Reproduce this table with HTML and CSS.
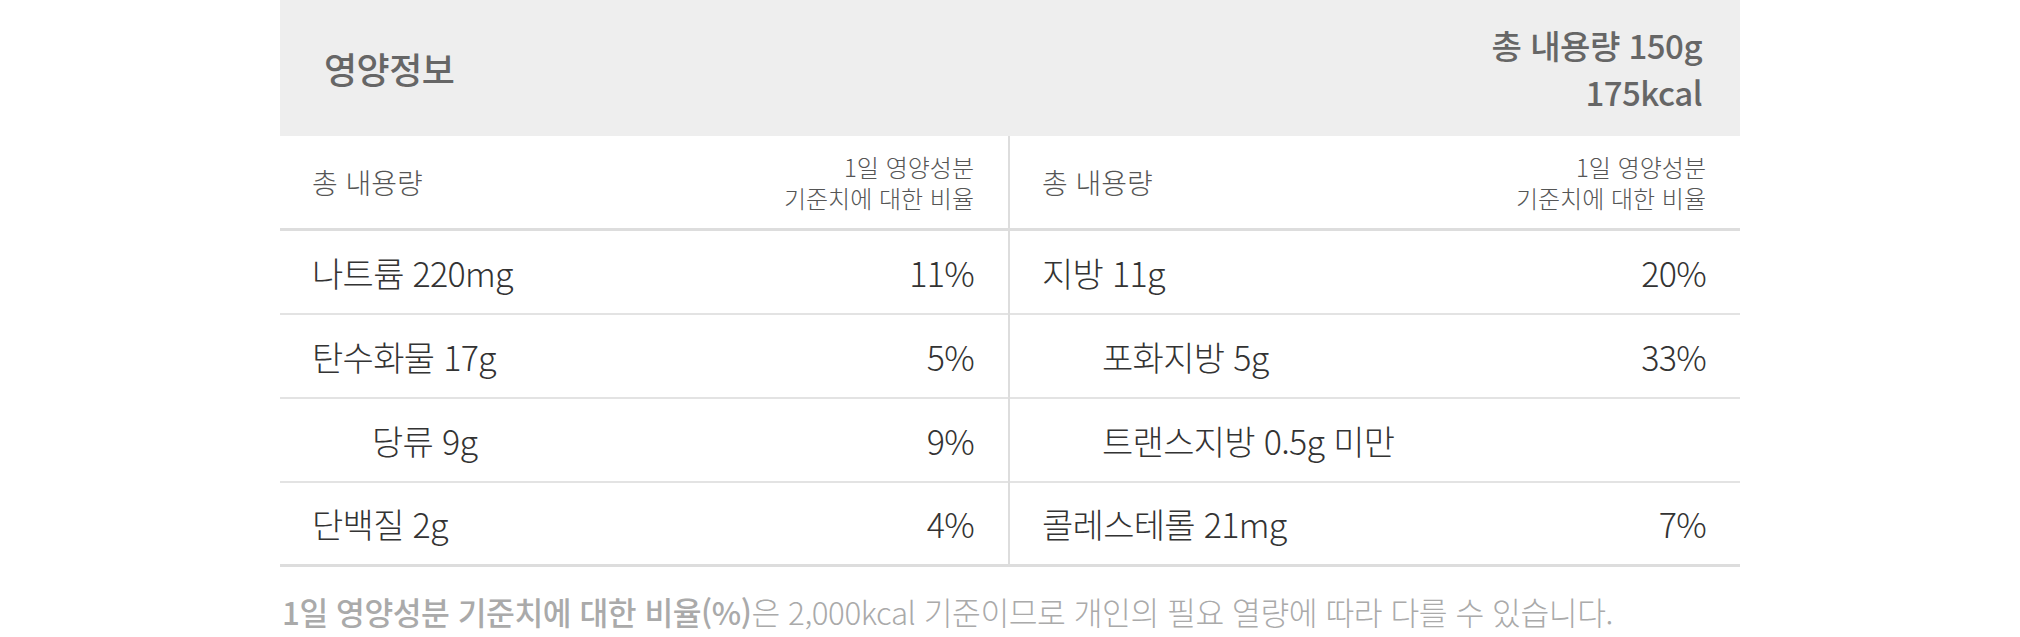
FILE: index.html
```html
<!DOCTYPE html>
<html lang="ko">
<head>
<meta charset="utf-8">
<link rel="stylesheet" href="styles.css">
</head>
<body>
<div class="wrap">
  <div class="head">
    <div class="title">영양정보</div>
    <div class="total">
      <div>총 내용량 150g</div>
      <div>175kcal</div>
    </div>
  </div>
  <div class="grid">
    <div class="col col-left">
      <div class="colhead">
        <span class="ch-label">총 내용량</span>
        <span class="ch-sub">1일 영양성분<br>기준치에 대한 비율</span>
      </div>
      <div class="row"><span>나트륨 220mg</span><span>11%</span></div>
      <div class="row"><span>탄수화물 17g</span><span>5%</span></div>
      <div class="row"><span class="sub">당류 9g</span><span>9%</span></div>
      <div class="row last"><span>단백질 2g</span><span>4%</span></div>
    </div>
    <div class="col">
      <div class="colhead">
        <span class="ch-label">총 내용량</span>
        <span class="ch-sub">1일 영양성분<br>기준치에 대한 비율</span>
      </div>
      <div class="row"><span>지방 11g</span><span>20%</span></div>
      <div class="row"><span class="sub">포화지방 5g</span><span>33%</span></div>
      <div class="row"><span class="sub">트랜스지방 0.5g 미만</span><span></span></div>
      <div class="row last"><span>콜레스테롤 21mg</span><span>7%</span></div>
    </div>
  </div>
  <p class="note"><strong>1일 영양성분 기준치에 대한 비율(%)</strong>은 2,000kcal 기준이므로 개인의 필요 열량에 따라 다를 수 있습니다.</p>
</div>
</body>
</html>
```
FILE: styles.css
```css
* { box-sizing: border-box; }
html, body { margin: 0; padding: 0; background: #fff; }
body {
  font-family: "Noto Sans CJK KR", "Noto Sans", sans-serif;
  color: #333;
}
.wrap {
  width: 1460px;
  margin: 0 auto;
}
.head {
  height: 136px;
  background: #eeeeee;
  display: flex;
  align-items: center;
  justify-content: space-between;
  padding: 0 38px 0 44px;
  color: #666;
}
.title {
  font-size: 36px;
  font-weight: 500;
  letter-spacing: -0.5px;
}
.total {
  text-align: right;
  font-size: 33px;
  font-weight: 500;
  line-height: 47px;
  letter-spacing: -0.5px;
  padding-top: 2px;
}
.grid {
  display: grid;
  grid-template-columns: 730px 730px;
}
.col-left {
  border-right: 2px solid #dddddd;
}
.colhead {
  height: 95px;
  border-bottom: 3px solid #dddddd;
  display: flex;
  align-items: center;
  justify-content: space-between;
  padding: 0 34px 0 32px;
  color: #555;
  font-weight: 300;
}
.ch-label {
  font-size: 28px;
}
.ch-sub {
  font-size: 24px;
  line-height: 31px;
  text-align: right;
}
.row {
  height: 84px;
  border-bottom: 2px solid #e3e3e3;
  display: flex;
  align-items: center;
  justify-content: space-between;
  padding: 0 34px 0 32px;
  font-size: 34px;
  font-weight: 300;
  color: #333;
  letter-spacing: -0.7px;
}
.row.last {
  border-bottom: 3px solid #dddddd;
}
.sub {
  padding-left: 60px;
}
.note {
  margin: 22px 0 0 2px;
  font-size: 31.3px;
  font-weight: 300;
  color: #aaa;
  letter-spacing: -0.45px;
  white-space: nowrap;
}
.note strong {
  font-weight: 500;
}
```
